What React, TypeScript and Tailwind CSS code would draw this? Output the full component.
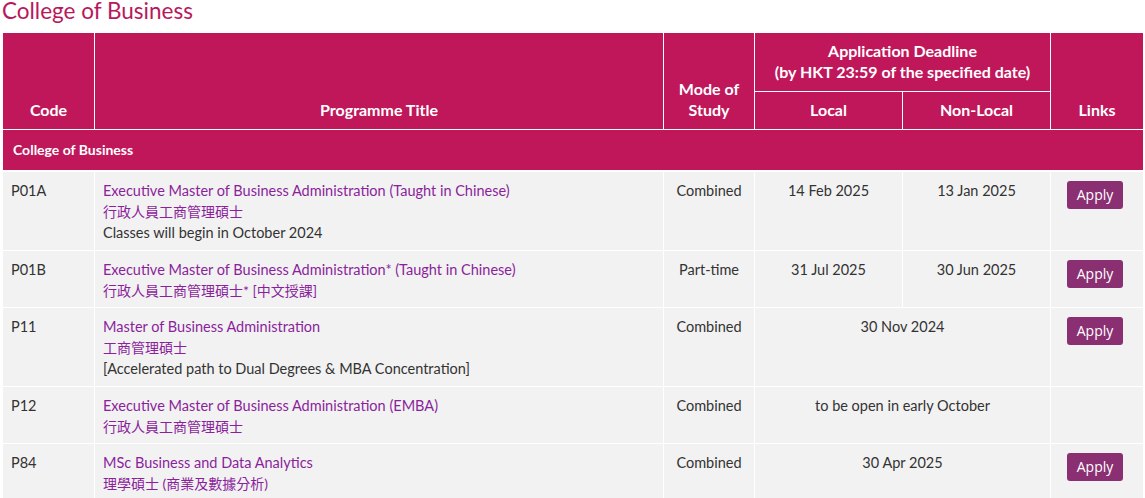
type Row = {
  code: string;
  title: string;
  chinese: string;
  note?: string;
  mode: string;
  local?: string;
  nonLocal?: string;
  merged?: string;
  apply: boolean;
};

const rows: Row[] = [
  {
    code: "P01A",
    title: "Executive Master of Business Administration (Taught in Chinese)",
    chinese: "行政人員工商管理碩士",
    note: "Classes will begin in October 2024",
    mode: "Combined",
    local: "14 Feb 2025",
    nonLocal: "13 Jan 2025",
    apply: true,
  },
  {
    code: "P01B",
    title: "Executive Master of Business Administration* (Taught in Chinese)",
    chinese: "行政人員工商管理碩士* [中文授課]",
    mode: "Part-time",
    local: "31 Jul 2025",
    nonLocal: "30 Jun 2025",
    apply: true,
  },
  {
    code: "P11",
    title: "Master of Business Administration",
    chinese: "工商管理碩士",
    note: "[Accelerated path to Dual Degrees & MBA Concentration]",
    mode: "Combined",
    merged: "30 Nov 2024",
    apply: true,
  },
  {
    code: "P12",
    title: "Executive Master of Business Administration (EMBA)",
    chinese: "行政人員工商管理碩士",
    mode: "Combined",
    merged: "to be open in early October",
    apply: false,
  },
  {
    code: "P84",
    title: "MSc Business and Data Analytics",
    chinese: "理學碩士 (商業及數據分析)",
    mode: "Combined",
    merged: "30 Apr 2025",
    apply: true,
  },
];

const font = { fontFamily: "Lato, 'Noto Sans CJK TC', sans-serif" };

function HeaderCell({ children, rowSpan, colSpan, className = "" }: { children: React.ReactNode; rowSpan?: number; colSpan?: number; className?: string }) {
  return (
    <th
      rowSpan={rowSpan}
      colSpan={colSpan}
      className={`border border-white px-2 pt-[7px] pb-[9px] text-center text-[16px] font-bold leading-[21px] text-white ${className}`}
    >
      {children}
    </th>
  );
}

function ApplyButton() {
  return (
    <button
      type="button"
      className="h-[28px] w-[56px] rounded-[3px] bg-[#8a2f72] text-[14px] text-white"
      style={{ fontFamily: "'Open Sans', sans-serif" }}
    >
      Apply
    </button>
  );
}

function ProgrammeRow({ row }: { row: Row }) {
  const cell = "border border-white px-2 pt-[9px] pb-[6px] align-top";
  return (
    <tr className="bg-[#f2f2f2] text-[14.5px] leading-[20.5px] text-[#333]">
      <td className={cell}>{row.code}</td>
      <td className={cell}>
        <div className="h-[20.5px] whitespace-nowrap text-[#8b1f9c]">{row.title}</div>
        <div className="h-[20.5px] whitespace-nowrap text-[14px] text-[#8b1f9c]">{row.chinese}</div>
        {row.note ? <div className="h-[22px] whitespace-nowrap pt-[1px]">{row.note}</div> : null}
      </td>
      <td className={`${cell} text-center`}>{row.mode}</td>
      {row.merged ? (
        <td colSpan={2} className={`${cell} text-center`}>
          {row.merged}
        </td>
      ) : (
        <>
          <td className={`${cell} text-center`}>{row.local}</td>
          <td className={`${cell} text-center`}>{row.nonLocal}</td>
        </>
      )}
      <td className="border border-white pl-[16px] pt-[9px] pb-[6px] text-left align-top">{row.apply ? <ApplyButton /> : null}</td>
    </tr>
  );
}

export default function App() {
  return (
    <div className="h-[498px] w-[1145px] overflow-hidden bg-white" style={font}>
      <h1 className="pl-[2px] text-[22.5px] font-normal leading-[22px] text-[#b8185c]">College of Business</h1>
      <table className="ml-[2px] mt-[10px] w-[1141px] table-fixed border-collapse">
        <colgroup>
          <col className="w-[92px]" />
          <col className="w-[569px]" />
          <col className="w-[91px]" />
          <col className="w-[148px]" />
          <col className="w-[148px]" />
          <col className="w-[93px]" />
        </colgroup>
        <thead className="bg-[#c0175b]">
          <tr>
            <HeaderCell rowSpan={2} className="align-bottom">Code</HeaderCell>
            <HeaderCell rowSpan={2} className="align-bottom">Programme Title</HeaderCell>
            <HeaderCell rowSpan={2} className="align-bottom">
              Mode of
              <br />
              Study
            </HeaderCell>
            <HeaderCell colSpan={2}>
              Application Deadline
              <br />
              (by HKT 23:59 of the specified date)
            </HeaderCell>
            <HeaderCell rowSpan={2} className="align-bottom">Links</HeaderCell>
          </tr>
          <tr>
            <HeaderCell>Local</HeaderCell>
            <HeaderCell>Non-Local</HeaderCell>
          </tr>
        </thead>
        <tbody>
          <tr className="bg-[#c0175b]">
            <td colSpan={6} className="border border-b-2 border-white px-[10px] py-[10px] text-[14px] font-bold leading-[20px] text-white">
              College of Business
            </td>
          </tr>
          {rows.map((row) => (
            <ProgrammeRow key={row.code} row={row} />
          ))}
        </tbody>
      </table>
    </div>
  );
}
